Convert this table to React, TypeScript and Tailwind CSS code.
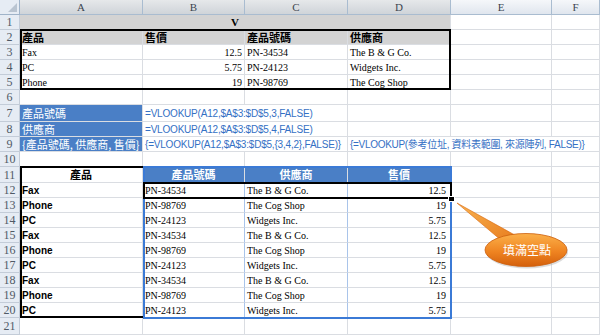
import React from "react";

const W = ["w-[123px]", "w-[102px]", "w-[103px]", "w-[103px]", "w-[101px]", "w-[48px]"];
const SERIF = "font-['Liberation_Serif','Noto_Sans_CJK_TC',serif]";
const CJK = "font-['Noto_Sans_CJK_TC','Liberation_Sans',sans-serif]";
const SANS = "font-['Liberation_Sans','Noto_Sans_CJK_TC',sans-serif]";

type CellProps = {
  col: number;
  className?: string;
  noR?: boolean;
  children?: React.ReactNode;
};

function Cell({ col, className = "", noR, children }: CellProps) {
  return (
    <div
      className={`${W[col]} shrink-0 h-full flex items-center px-[2px] whitespace-nowrap border-b border-[#dadde2] ${
        noR ? "" : "border-r"
      } ${className}`}
    >
      {children}
    </div>
  );
}

function Row({ n, h, children }: { n: number; h: string; children?: React.ReactNode }) {
  return (
    <div className={`flex ${h}`}>
      <div
        className={`w-[20px] shrink-0 h-full flex items-center justify-center bg-[#e6ecf4] border-r border-b border-[#c3ccd8] text-[12px] text-[#505a66] ${SERIF}`}
      >
        {n}
      </div>
      {children}
    </div>
  );
}

// product, part no, supplier, price
const lookup = [
  ["Fax", "PN-34534", "The B & G Co.", "12.5"],
  ["Phone", "PN-98769", "The Cog Shop", "19"],
  ["PC", "PN-24123", "Widgets Inc.", "5.75"],
];
const source = [lookup[0], lookup[2], lookup[1]];

function Empty({ from = 0 }: { from?: number }) {
  return (
    <>
      {[0, 1, 2, 3, 4, 5].slice(from).map((c) => (
        <Cell key={c} col={c} />
      ))}
    </>
  );
}

export default function App() {
  const fill = [0, 1, 2, 0, 1, 2, 0, 1, 2];
  const heads = ["A", "B", "C", "D", "E", "F"];

  return (
    <div className={`relative w-[600px] h-[335px] overflow-hidden bg-white text-black ${SERIF}`}>
      {/* column headers */}
      <div className="flex h-[15px]">
        <div className="w-[20px] shrink-0 h-full bg-[#e6ecf4] border-r border-b border-[#9fb3c9] flex items-end justify-end p-[2px]">
          <svg width="9" height="9" viewBox="0 0 9 9">
            <polygon points="9,0 9,9 0,9" fill="#b9c4d1" />
          </svg>
        </div>
        {heads.map((h, i) => (
          <div
            key={h}
            className={`${W[i]} shrink-0 h-full flex items-center justify-center border-r border-b border-[#a9bcd0] text-[11px] text-[#3c4550] ${
              i < 4 ? "bg-linear-to-b from-[#e6e8ea] to-[#cfd4d9]" : "bg-linear-to-b from-[#f5f7fa] to-[#e0e6ee]"
            }`}
          >
            {h}
          </div>
        ))}
      </div>

      {/* row 1 */}
      <Row n={1} h="h-[15px]">
        <div className="w-[431px] shrink-0 h-full bg-[#d3d3d3] border-b border-r border-[#dadde2] flex items-center justify-center text-[11px] font-bold">
          V
        </div>
        <Cell col={4} />
        <Cell col={5} />
      </Row>

      {/* row 2 */}
      <Row n={2} h="h-[15px]">
        {["產品", "售價", "產品號碼", "供應商"].map((t, i) => (
          <Cell key={t} col={i} className={`bg-[#d3d3d3] border-[#d3d3d3] text-[11px] font-bold ${CJK}`}>
            {t}
          </Cell>
        ))}
        <Cell col={4} />
        <Cell col={5} />
      </Row>

      {/* rows 3-5 */}
      {source.map((r, i) => (
        <Row key={r[0]} n={i + 3} h="h-[15px]">
          <Cell col={0} className="text-[10px]">{r[0]}</Cell>
          <Cell col={1} className="text-[10px] justify-end">{r[3]}</Cell>
          <Cell col={2} className="text-[10px]">{r[1]}</Cell>
          <Cell col={3} className="text-[10px]">{r[2]}</Cell>
          <Cell col={4} />
          <Cell col={5} />
        </Row>
      ))}

      <Row n={6} h="h-[15px]">
        <Empty />
      </Row>

      {/* rows 7-9: formulas */}
      <Row n={7} h="h-[17px]">
        <Cell col={0} className={`bg-[#4a7fc6] border-[#4a7fc6] text-white text-[11px] ${CJK}`}>產品號碼</Cell>
        <Cell col={1} noR className={`text-[10px] tracking-[-0.2px] text-[#3470c4] ${SANS}`}>
          =VLOOKUP(A12,$A$3:$D$5,3,FALSE)
        </Cell>
        <Empty from={2} />
      </Row>
      <Row n={8} h="h-[15px]">
        <Cell col={0} className={`bg-[#4a7fc6] border-[#4a7fc6] text-white text-[11px] ${CJK}`}>供應商</Cell>
        <Cell col={1} noR className={`text-[10px] tracking-[-0.2px] text-[#3470c4] ${SANS}`}>
          =VLOOKUP(A12,$A$3:$D$5,4,FALSE)
        </Cell>
        <Empty from={2} />
      </Row>
      <Row n={9} h="h-[15px]">
        <Cell col={0} className={`bg-[#4a7fc6] border-[#4a7fc6] text-white text-[11px] ${CJK}`}>
          {"{產品號碼, 供應商, 售價}"}
        </Cell>
        <Cell col={1} noR className={`text-[10px] tracking-[-0.2px] text-[#3470c4] ${SANS}`}>
          {"{=VLOOKUP(A12,$A$3:$D$5,{3,4,2},FALSE)}"}
        </Cell>
        <Cell col={2} />
        <Cell col={3} noR className={`text-[10px] tracking-[-0.3px] text-[#3470c4] ${SANS}`}>
          {"{=VLOOKUP(參考位址, 資料表範圍, 來源陣列, FALSE)}"}
        </Cell>
        <Cell col={4} noR />
        <Cell col={5} />
      </Row>
      <Row n={10} h="h-[15px]">
        <Empty />
      </Row>

      {/* row 11: table header */}
      <Row n={11} h="h-[16px]">
        <Cell col={0} className={`justify-center text-[11px] font-bold ${CJK}`}>產品</Cell>
        {["產品號碼", "供應商", "售價"].map((t, i) => (
          <Cell
            key={t}
            col={i + 1}
            className={`justify-center bg-[#4a7fc6] border-[#4a7fc6] text-white text-[11px] font-bold ${CJK}`}
          >
            {t}
          </Cell>
        ))}
        <Cell col={4} />
        <Cell col={5} />
      </Row>

      {/* rows 12-20 */}
      {fill.map((k, i) => (
        <Row key={i} n={i + 12} h="h-[15px]">
          <Cell col={0} className={`text-[10px] font-bold ${SANS}`}>{lookup[k][0]}</Cell>
          <Cell col={1} className="text-[10px] border-r-[#a9c4ea]">{lookup[k][1]}</Cell>
          <Cell col={2} className="text-[10px] border-r-[#a9c4ea]">{lookup[k][2]}</Cell>
          <Cell col={3} className="text-[10px] justify-end pr-[4px]">{lookup[k][3]}</Cell>
          <Cell col={4} />
          <Cell col={5} />
        </Row>
      ))}

      <Row n={21} h="h-[17px]">
        <Empty />
      </Row>

      {/* range borders */}
      <div className="absolute left-[20px] top-[29px] w-[431px] h-[61px] border-2 border-black pointer-events-none" />
      <div className="absolute left-[20px] top-[166px] w-[125px] h-[152px] border-2 border-black pointer-events-none" />
      <div className="absolute left-[143px] top-[166px] w-[309px] h-[153px] border-2 border-[#3b7ad6] pointer-events-none" />
      <div className="absolute left-[143px] top-[182px] w-[309px] h-[17px] border-2 border-black pointer-events-none" />
      <div className="absolute left-[448px] top-[196px] w-[7px] h-[6px] bg-black border border-white" />

      {/* callout */}
      <svg className="absolute left-[450px] top-[195px]" width="125" height="78" viewBox="0 0 125 78">
        <defs>
          <linearGradient id="og" x1="0" y1="0" x2="0" y2="1">
            <stop offset="0" stopColor="#fbb04a" />
            <stop offset="0.55" stopColor="#ef8421" />
            <stop offset="1" stopColor="#d4600c" />
          </linearGradient>
          <linearGradient id="tg" x1="0" y1="0" x2="1" y2="1">
            <stop offset="0" stopColor="#f9b350" />
            <stop offset="1" stopColor="#e77a1c" />
          </linearGradient>
        </defs>
        <ellipse cx="77" cy="57" rx="41" ry="16.5" fill="#9a9a9a" opacity="0.35" />
        <polygon points="7,8 52,46 72,44" fill="url(#tg)" stroke="#d9680f" strokeWidth="0.6" />
        <ellipse cx="76" cy="55" rx="41" ry="16.5" fill="url(#og)" stroke="#cc5e0d" strokeWidth="0.8" />
        <text
          x="77"
          y="59.5"
          textAnchor="middle"
          fontSize="12"
          fill="#fff"
          fontFamily="'Noto Sans CJK TC', sans-serif"
        >
          填滿空點
        </text>
      </svg>
    </div>
  );
}
